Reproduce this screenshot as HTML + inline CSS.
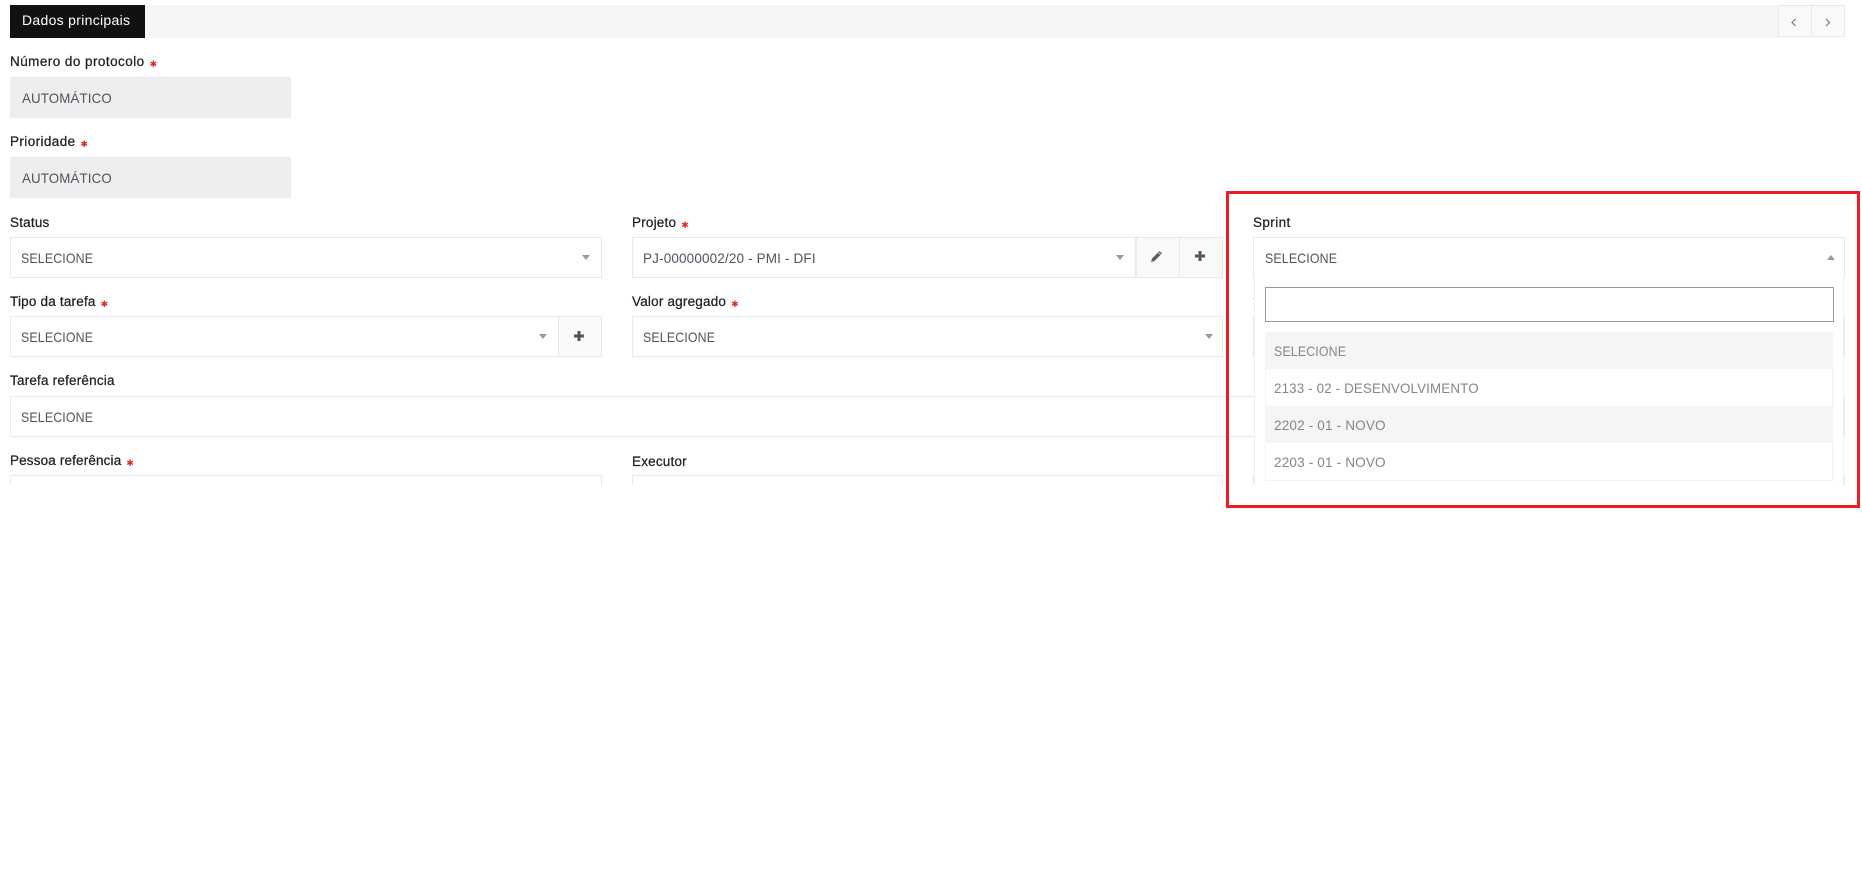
<!DOCTYPE html>
<html lang="pt"><head><meta charset="utf-8"><title>Dados principais</title>
<style>
html,body{margin:0;padding:0;background:#fff;width:1862px;height:892px;overflow:hidden}
body{position:relative;font-family:"Liberation Sans",sans-serif;font-size:14px;color:#4a4f5c}
.a{position:absolute;box-sizing:border-box}
.l{position:absolute;font-size:13.5px;color:#1c1f26;white-space:nowrap;line-height:18px;letter-spacing:.2px;-webkit-text-stroke:.25px #1c1f26}
.l i{position:relative;top:1px;font-style:normal;color:#d92a2a;-webkit-text-stroke:0;font-size:9px;margin-left:5px;font-family:"DejaVu Sans",sans-serif}
.box{position:absolute;box-sizing:border-box;border:1px solid #e4e8f3;background:#fff;height:41px}
.t{position:absolute;white-space:nowrap;line-height:20px;font-size:14px;color:#4d5461;letter-spacing:.15px;transform-origin:left center}
.s{transform:scaleX(.885)}
.c{position:absolute;width:0;height:0;border-left:4.5px solid transparent;border-right:4.5px solid transparent;border-top:5px solid #999}
.u{border-top:0;border-bottom:5px solid #999}
.btn{position:absolute;box-sizing:border-box;border:1px solid #e4e8f3;background:#fafafa;height:41px}
.clip{position:absolute;left:0;top:0;width:1862px;height:485px;overflow:hidden}
.opt{position:absolute;left:1265px;width:568px;box-sizing:border-box}
.opt span{position:absolute;left:9px;top:9px;white-space:nowrap;line-height:20px;font-size:14px;color:#868686;letter-spacing:.15px;transform-origin:left center}
</style></head><body>
<div class="clip">
<div class="a" style="left:10px;top:5px;width:1768px;height:33px;background:#f6f6f6"></div>
<div class="a" style="left:10px;top:5px;width:135px;height:33px;background:#111;color:#fff;font-size:14px;line-height:31px;padding-left:12px;letter-spacing:.3px">Dados principais</div>
<div class="btn" style="left:1778px;top:5px;width:34px;height:32px"></div>
<div class="btn" style="left:1811px;top:5px;width:34px;height:32px"></div>
<svg class="a" style="left:1790px;top:18px" width="8" height="9"><path d="M5.5 1 L2 4.5 L5.5 8" fill="none" stroke="#6b7a90" stroke-width="1.2"/></svg>
<svg class="a" style="left:1824px;top:18px" width="8" height="9"><path d="M2 1 L5.5 4.5 L2 8" fill="none" stroke="#6b7a90" stroke-width="1.2"/></svg>

<div class="l" style="left:10px;top:53px;letter-spacing:.45px">Número do protocolo<i>✱</i></div>
<div class="a" style="left:10px;top:77px;width:281px;height:41px;background:#eeeeee;border:1px solid #e8ebf3"></div>
<div class="t" style="left:22px;top:88px;transform:scaleX(.95)">AUTOMÁTICO</div>
<div class="l" style="left:10px;top:133px;letter-spacing:.4px">Prioridade<i>✱</i></div>
<div class="a" style="left:10px;top:157px;width:281px;height:41px;background:#eeeeee;border:1px solid #e8ebf3"></div>
<div class="t" style="left:22px;top:168px;transform:scaleX(.95)">AUTOMÁTICO</div>

<div class="l" style="left:10px;top:214px">Status</div>
<div class="box" style="left:10px;top:237px;width:592px"></div>
<div class="t s" style="left:21px;top:248px">SELECIONE</div>
<div class="c" style="left:582px;top:255px"></div>

<div class="l" style="left:632px;top:214px">Projeto<i>✱</i></div>
<div class="box" style="left:632px;top:237px;width:504px"></div>
<div class="t" style="left:643px;top:248px;transform:scaleX(.965)">PJ-00000002/20 - PMI - DFI</div>
<div class="c" style="left:1116px;top:255px"></div>
<div class="btn" style="left:1136px;top:237px;width:44px"></div>
<div class="btn" style="left:1179px;top:237px;width:44px"></div>
<svg class="a" style="left:1150px;top:249px" width="14" height="14" viewBox="0 0 14 14"><path d="M1 13 L2 9.5 L9.5 2 L12 4.5 L4.5 12 Z" fill="#5f5f5f"/><path d="M8.6 3.6 L10.6 5.6" stroke="#fafafa" stroke-width=".7"/></svg>
<svg class="a" style="left:1194px;top:250px" width="12" height="12" viewBox="0 0 12 12"><path d="M4.5 1h3v3.5H11v3H7.5V11h-3V7.5H1v-3h3.5z" fill="#555"/></svg>

<div class="l" style="left:10px;top:293px">Tipo da tarefa<i>✱</i></div>
<div class="box" style="left:10px;top:316px;width:549px"></div>
<div class="btn" style="left:558px;top:316px;width:44px"></div>
<div class="t s" style="left:21px;top:327px">SELECIONE</div>
<div class="c" style="left:539px;top:334px"></div>
<svg class="a" style="left:573px;top:330px" width="12" height="12" viewBox="0 0 12 12"><path d="M4.5 1h3v3.5H11v3H7.5V11h-3V7.5H1v-3h3.5z" fill="#555"/></svg>

<div class="l" style="left:632px;top:293px">Valor agregado<i>✱</i></div>
<div class="box" style="left:632px;top:316px;width:591px"></div>
<div class="t s" style="left:643px;top:327px">SELECIONE</div>
<div class="c" style="left:1205px;top:334px"></div>

<div class="box" style="left:1253px;top:316px;width:592px"></div>

<div class="l" style="left:10px;top:372px">Tarefa referência</div>
<div class="box" style="left:10px;top:396px;width:1835px"></div>
<div class="t s" style="left:21px;top:407px">SELECIONE</div>

<div class="l" style="left:10px;top:452px;letter-spacing:.15px">Pessoa referência<i>✱</i></div>
<div class="box" style="left:10px;top:475px;width:592px"></div>
<div class="l" style="left:632px;top:453px">Executor</div>
<div class="box" style="left:632px;top:475px;width:591px"></div>
<div class="box" style="left:1253px;top:475px;width:592px"></div>

<div class="l" style="left:1253px;top:214px;letter-spacing:.4px">Sprint</div>
<div class="box" style="left:1253px;top:237px;width:592px;border-bottom:0"></div>
<div class="t s" style="left:1265px;top:248px">SELECIONE</div>
<div class="c u" style="left:1827px;top:255px"></div>
<div class="a" style="left:1253px;top:298px;width:1px;height:1px;background:#f3b777"></div>
<div class="a" style="left:1254px;top:277px;width:590px;height:208px;background:#fff;border-left:1px solid #eef0f6;border-right:1px solid #eef0f6"></div>
<div class="a" style="left:1265px;top:287px;width:569px;height:35px;border:1px solid #999;background:#fff"></div>
<div class="opt" style="top:332px;height:37px;background:#f5f5f5"><span class="s">SELECIONE</span></div>
<div class="opt" style="top:369px;height:37px;background:#fff;border-left:1px solid #f2f2f2;border-right:1px solid #f2f2f2"><span style="left:8px;transform:scaleX(.955)">2133 - 02 - DESENVOLVIMENTO</span></div>
<div class="opt" style="top:406px;height:37px;background:#f5f5f5"><span style="transform:scaleX(.97)">2202 - 01 - NOVO</span></div>
<div class="opt" style="top:443px;height:38px;background:#fff;border:1px solid #f2f2f2;border-top:0"><span style="left:8px;transform:scaleX(.97)">2203 - 01 - NOVO</span></div>
</div>
<div class="a" style="left:1226px;top:191px;width:634px;height:317px;border:3.5px solid #ed1c24"></div>
</body></html>
